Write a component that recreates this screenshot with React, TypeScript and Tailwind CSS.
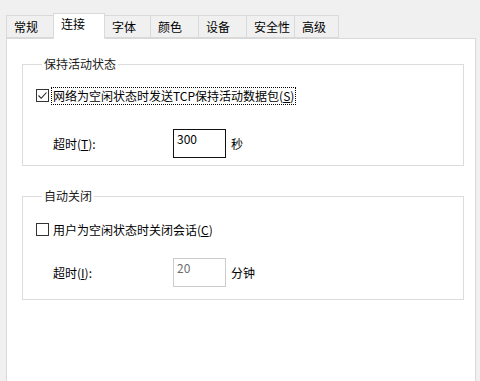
import type { ReactNode } from 'react';

const font = { fontFamily: '"Noto Sans CJK SC", "Microsoft YaHei", sans-serif' };

const tabs = [
    { label: '常规', w: 'w-[48px]' },
    { label: '连接', w: 'w-[52px]' },
    { label: '字体', w: 'w-[47px]' },
    { label: '颜色', w: 'w-[49px]' },
    { label: '设备', w: 'w-[49px]' },
    { label: '安全性', w: 'w-[49px]' },
    { label: '高级', w: 'w-[45px]' },
];

function CheckBox({ checked }: { checked: boolean }) {
    return (
        <span className="w-[13px] h-[13px] border border-[#333] bg-white flex items-center justify-center shrink-0">
            {checked && (
                <svg width="11" height="11" viewBox="0 0 11 11">
                    <path d="M1.5 5.5 L4.2 8.3 L9.5 2.5" fill="none" stroke="#222" strokeWidth="1.1" />
                </svg>
            )}
        </span>
    );
}

function Group({ title, className, children }: { title: string; className: string; children: ReactNode }) {
    return (
        <fieldset className={`ml-[15px] w-[442px] border border-[#dcdcdc] px-[13px] ${className}`}>
            <legend className="ml-[6px] px-[2px] leading-[16px] text-[#1a1a1a]">{title}</legend>
            {children}
        </fieldset>
    );
}

export default function App() {
    return (
        <div className="w-[480px] h-[381px] bg-[#f0f0f0] flex flex-col pt-[13px] text-[12px] text-black" style={font}>
            {/* Tab strip */}
            <div className="flex items-end pl-[6px] h-[25px] relative z-10">
                {tabs.map((t, i) => {
                    const active = i === 1;
                    return (
                        <div
                            key={t.label}
                            className={`${t.w} ${i > 0 ? '-ml-px' : ''} border border-[#d9d9d9] leading-[16px] pl-[7px] ${
                                active
                                    ? 'h-[26px] -mb-px bg-white border-b-white relative z-10 pt-[2px]'
                                    : 'h-[23px] bg-[#f0f0f0] pt-[3px]'
                            }`}
                        >
                            {t.label}
                        </div>
                    );
                })}
            </div>

            {/* Panel */}
            <div className="flex-1 ml-[6px] mr-[4px] bg-white border border-[#d9d9d9] border-b-0 pt-[17px]">
                <Group title="保持活动状态" className="pt-[14px] pb-[7px]">
                    <div className="flex items-center gap-[2px] h-[19px]">
                        <CheckBox checked />
                        <span className="border border-dotted border-black px-px leading-[16px]">
                            网络为空闲状态时发送TCP保持活动数据包(<u>S</u>)
                        </span>
                    </div>
                    <div className="flex items-center mt-[24px] pl-[17px]">
                        <span className="w-[120px]">超时(<u>T</u>):</span>
                        <div className="w-[53px] h-[29px] border border-[#111] pl-[3px] pt-[1px] leading-[16px]">300</div>
                        <span className="ml-[5px]">秒</span>
                    </div>
                </Group>

                <div className="h-[22px]" />

                <Group title="自动关闭" className="pt-[16px] pb-[12px]">
                    <div className="flex items-center gap-[2px] h-[19px]">
                        <CheckBox checked={false} />
                        <span className="px-[2px] leading-[16px]">用户为空闲状态时关闭会话(<u>C</u>)</span>
                    </div>
                    <div className="flex items-center mt-[19px] pl-[17px]">
                        <span className="w-[120px]">超时(<u>I</u>):</span>
                        <div className="w-[53px] h-[29px] border border-[#cccccc] pl-[3px] pt-[1px] leading-[16px] text-[#6d6d6d]">20</div>
                        <span className="ml-[5px]">分钟</span>
                    </div>
                </Group>
            </div>
        </div>
    );
}
